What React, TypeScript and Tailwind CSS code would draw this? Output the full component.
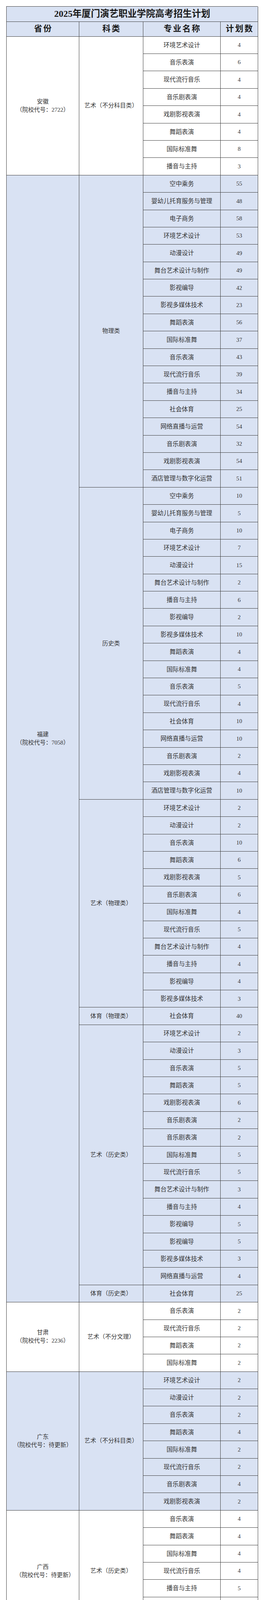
type Item = [string, number];
type Group = { cat: string; items: Item[] };
type Province = { name: string; code: string; shift?: string; groups: Group[] };

const provinces: Province[] = [
  {
    name: "安徽",
    code: "（院校代号：2722）",
    groups: [
      {
        cat: "艺术（不分科目类）",
        items: [
          ["环境艺术设计", 4],
          ["音乐表演", 6],
          ["现代流行音乐", 4],
          ["音乐剧表演", 4],
          ["戏剧影视表演", 4],
          ["舞蹈表演", 4],
          ["国际标准舞", 8],
          ["播音与主持", 3],
        ],
      },
    ],
  },
  {
    name: "福建",
    code: "（院校代号：7058）",
    groups: [
      {
        cat: "物理类",
        items: [
          ["空中乘务", 55],
          ["婴幼儿托育服务与管理", 48],
          ["电子商务", 58],
          ["环境艺术设计", 53],
          ["动漫设计", 49],
          ["舞台艺术设计与制作", 49],
          ["影视编导", 42],
          ["影视多媒体技术", 23],
          ["舞蹈表演", 56],
          ["国际标准舞", 37],
          ["音乐表演", 43],
          ["现代流行音乐", 39],
          ["播音与主持", 34],
          ["社会体育", 25],
          ["网络直播与运营", 54],
          ["音乐剧表演", 32],
          ["戏剧影视表演", 54],
          ["酒店管理与数字化运营", 51],
        ],
      },
      {
        cat: "历史类",
        items: [
          ["空中乘务", 10],
          ["婴幼儿托育服务与管理", 5],
          ["电子商务", 10],
          ["环境艺术设计", 7],
          ["动漫设计", 15],
          ["舞台艺术设计与制作", 2],
          ["播音与主持", 6],
          ["影视编导", 2],
          ["影视多媒体技术", 10],
          ["舞蹈表演", 4],
          ["国际标准舞", 4],
          ["音乐表演", 5],
          ["现代流行音乐", 4],
          ["社会体育", 10],
          ["网络直播与运营", 10],
          ["音乐剧表演", 2],
          ["戏剧影视表演", 4],
          ["酒店管理与数字化运营", 10],
        ],
      },
      {
        cat: "艺术（物理类）",
        items: [
          ["环境艺术设计", 2],
          ["动漫设计", 2],
          ["音乐表演", 10],
          ["舞蹈表演", 6],
          ["戏剧影视表演", 5],
          ["音乐剧表演", 6],
          ["国际标准舞", 4],
          ["现代流行音乐", 5],
          ["舞台艺术设计与制作", 4],
          ["播音与主持", 4],
          ["影视编导", 4],
          ["影视多媒体技术", 3],
        ],
      },
      { cat: "体育（物理类）", items: [["社会体育", 40]] },
      {
        cat: "艺术（历史类）",
        items: [
          ["环境艺术设计", 2],
          ["动漫设计", 3],
          ["音乐表演", 5],
          ["舞蹈表演", 5],
          ["戏剧影视表演", 6],
          ["音乐剧表演", 2],
          ["音乐剧表演", 2],
          ["国际标准舞", 5],
          ["现代流行音乐", 5],
          ["舞台艺术设计与制作", 3],
          ["播音与主持", 4],
          ["影视编导", 5],
          ["影视编导", 5],
          ["影视多媒体技术", 3],
          ["网络直播与运营", 4],
        ],
      },
      { cat: "体育（历史类）", items: [["社会体育", 25]] },
    ],
  },
  {
    name: "甘肃",
    code: "（院校代号：2236）",
    groups: [
      {
        cat: "艺术（不分文理）",
        items: [
          ["音乐表演", 2],
          ["现代流行音乐", 2],
          ["舞蹈表演", 2],
          ["国际标准舞", 2],
        ],
      },
    ],
  },
  {
    name: "广东",
    code: "（院校代号：待更新）",
    groups: [
      {
        cat: "艺术（不分科目类）",
        items: [
          ["环境艺术设计", 2],
          ["动漫设计", 2],
          ["音乐表演", 2],
          ["舞蹈表演", 4],
          ["国际标准舞", 2],
          ["现代流行音乐", 2],
          ["音乐剧表演", 4],
          ["戏剧影视表演", 2],
        ],
      },
    ],
  },
  {
    name: "广西",
    code: "（院校代号：待更新）",
    shift: "pl-[12px]",
    groups: [
      {
        cat: "艺术（历史类）",
        items: [
          ["音乐表演", 4],
          ["舞蹈表演", 4],
          ["国际标准舞", 4],
          ["现代流行音乐", 4],
          ["播音与主持", 5],
          ["戏剧影视表演", 2],
          ["音乐剧表演", 2],
        ],
      },
    ],
  },
  {
    name: "贵州",
    code: "（院校代号：2540）",
    shift: "pl-[6px]",
    groups: [
      {
        cat: "艺术（不分科目类）",
        items: [
          ["音乐表演", 2],
          ["舞蹈表演", 4],
        ],
      },
    ],
  },
  {
    name: "海南",
    code: "（院校代号：1243）",
    groups: [
      {
        cat: "艺术（不分文理）",
        items: [
          ["音乐表演", 2],
          ["舞蹈表演", 4],
          ["国际标准舞", 3],
          ["现代流行音乐", 2],
          ["戏剧影视表演", 2],
          ["音乐剧表演", 2],
        ],
      },
    ],
  },
  {
    name: "河北",
    code: "（院校代号：2564）",
    groups: [
      { cat: "物理类", items: [["酒店管理与数字化运营", 20]] },
      {
        cat: "艺术（不分科目类）",
        items: [
          ["音乐表演", 10],
          ["舞蹈表演", 10],
          ["国际标准舞", 10],
          ["现代流行音乐", 10],
          ["戏剧影视表演", 10],
          ["音乐剧表演", 10],
        ],
      },
    ],
  },
  {
    name: "河南",
    code: "（院校代号：9726）",
    shift: "pl-[10px]",
    groups: [
      {
        cat: "艺术（历史类）",
        items: [
          ["音乐表演", 4],
          ["现代流行音乐", 2],
          ["音乐剧表演", 2],
          ["国际标准舞", 19],
          ["舞蹈表演", 2],
          ["播音与主持", 4],
          ["戏剧影视表演", 4],
        ],
      },
      { cat: "物理类", items: [["酒店管理与数字化运营", 6]] },
    ],
  },
  {
    name: "黑龙江",
    code: "（院校代号：4776）",
    shift: "pl-[6px]",
    groups: [
      {
        cat: "艺术（不分科目类）",
        items: [
          ["音乐表演", 3],
          ["国际标准舞", 2],
          ["舞蹈表演", 3],
          ["现代流行音乐", 2],
          ["影视编导", 4],
        ],
      },
    ],
  },
  {
    name: "湖北",
    code: "（院校代号：T094）",
    groups: [
      {
        cat: "艺术（不分文理）",
        items: [
          ["环境艺术设计", 3],
          ["音乐表演", 4],
          ["现代流行音乐", 4],
          ["舞蹈表演", 4],
          ["国际标准舞", 4],
          ["音乐剧表演", 2],
          ["戏剧影视表演", 2],
        ],
      },
    ],
  },
  {
    name: "湖南",
    code: "（院校代号：3550）",
    shift: "pl-[6px]",
    groups: [
      {
        cat: "物理类",
        items: [
          ["婴幼儿托育服务与管理", 2],
          ["环境艺术设计", 2],
          ["影视多媒体技术", 2],
        ],
      },
    ],
  },
  {
    name: "吉林",
    code: "（院校代号：待更新）",
    groups: [
      {
        cat: "艺术（历史类）",
        items: [
          ["舞台艺术设计与制作", 3],
          ["音乐表演", 2],
        ],
      },
    ],
  },
  {
    name: "江苏",
    code: "（院校代号：8151）",
    shift: "pl-[10px]",
    groups: [
      {
        cat: "艺术（历史类）",
        items: [
          ["音乐表演", 3],
          ["现代流行音乐", 3],
        ],
      },
    ],
  },
  {
    name: "江西",
    code: "（院校代号：6432）",
    shift: "pl-[20px]",
    groups: [
      {
        cat: "艺术（不分科目类）",
        items: [
          ["动漫设计", 4],
          ["音乐表演", 4],
          ["现代流行音乐", 4],
          ["音乐表演", 6],
          ["现代流行音乐", 5],
          ["舞蹈表演", 6],
          ["戏剧影视表演", 4],
          ["国际标准舞", 5],
          ["舞台艺术设计与制作", 4],
          ["播音与主持", 2],
          ["影视编导", 5],
          ["音乐剧表演", 2],
        ],
      },
    ],
  },
  {
    name: "辽宁",
    code: "（院校代号：待更新）",
    groups: [{ cat: "艺术（历史类）", items: [["音乐表演", 7]] }],
  },
  {
    name: "内蒙古",
    code: "（院校代号：0B86）",
    groups: [
      {
        cat: "艺术（不分文理）",
        items: [
          ["音乐表演", 2],
          ["现代流行音乐", 3],
        ],
      },
    ],
  },
  {
    name: "宁夏",
    code: "（院校代号：3590）",
    shift: "pl-[18px]",
    groups: [
      {
        cat: "物理类",
        items: [
          ["电子商务", 2],
          ["网络直播与运营", 2],
        ],
      },
    ],
  },
  {
    name: "山东",
    code: "（院校代号：D767）",
    shift: "pl-[22px]",
    groups: [
      {
        cat: "艺术（不分文理）",
        items: [
          ["音乐表演", 5],
          ["舞蹈表演", 11],
          ["国际标准舞", 17],
          ["音乐剧表演", 5],
          ["现代流行音乐", 5],
          ["戏剧影视表演", 4],
        ],
      },
    ],
  },
  {
    name: "四川",
    code: "（院校代号：3551）",
    shift: "pl-[31px]",
    groups: [
      {
        cat: "艺术（不分科目类）",
        items: [
          ["音乐表演", 4],
          ["舞蹈表演", 2],
        ],
      },
    ],
  },
  {
    name: "云南",
    code: "（院校代号3524）",
    shift: "pl-[20px]",
    groups: [
      {
        cat: "艺术（不分科目类）",
        items: [
          ["音乐表演", 2],
          ["音乐表演", 4],
          ["舞蹈表演", 3],
          ["国际标准舞", 2],
          ["播音与主持", 2],
        ],
      },
    ],
  },
  {
    name: "浙江",
    code: "（院校代号：3551）",
    shift: "pl-[20px]",
    groups: [
      {
        cat: "艺术（不分文理）",
        items: [
          ["音乐表演", 10],
          ["舞蹈表演", 10],
          ["国际标准舞", 10],
          ["戏剧影视表演", 10],
          ["音乐剧表演", 10],
          ["现代流行音乐", 10],
        ],
      },
      { cat: "综合改革", items: [["酒店管理与数字化运营", 13]] },
    ],
  },
  {
    name: "重庆",
    code: "（院校代号：3522）",
    shift: "pl-[4px]",
    groups: [
      {
        cat: "艺术（不分科目类）",
        items: [
          ["音乐表演", 2],
          ["舞蹈表演", 4],
          ["音乐剧表演", 3],
          ["现代流行音乐", 2],
        ],
      },
    ],
  },
];

const cell = "flex items-center justify-center border-r border-b border-[#3d3d3d] text-center";

const App = () => {
  return (
    <div className="bg-white pt-4 pb-6 pl-4 font-['Liberation_Serif','Noto_Sans_CJK_SC',serif] text-[#333333]">
      <div className="grid w-[644px] grid-cols-[186px_164px_198px_96px] grid-rows-[38.6px_38px] auto-rows-[44.4px] border-t border-l border-[#3d3d3d]">
        <div className={`${cell} col-span-4 bg-[#d9e2f3] text-[23.5px] font-bold text-[#1a1a1a]`}>
          2025年厦门演艺职业学院高考招生计划
        </div>
        {["省份", "科类", "专业名称", "计划数"].map((h) => (
          <div
            key={h}
            className={`${cell} bg-[#d9e2f3] pl-[3px] text-[21px] font-bold tracking-[3px] text-[#1a1a1a]`}
          >
            {h}
          </div>
        ))}
        {provinces.map((p, pi) => {
          const total = p.groups.reduce((n, g) => n + g.items.length, 0);
          const bg = pi % 2 === 1 ? "bg-[#d9e2f3]" : "bg-white";
          return p.groups.map((g, gi) =>
            g.items.map(([major, count], ii) => [
              gi === 0 && ii === 0 ? (
                <div
                  key={`p-${pi}`}
                  className={`${cell} ${bg} col-start-1 flex-col text-[15px] leading-[21px]`}
                  style={{ gridRow: `span ${total}` }}
                >
                  <div>{p.name}</div>
                  <div className={p.shift}>{p.code}</div>
                </div>
              ) : null,
              ii === 0 ? (
                <div
                  key={`c-${pi}-${gi}`}
                  className={`${cell} ${bg} col-start-2 text-[15px] tracking-[0.2px]`}
                  style={{ gridRow: `span ${g.items.length}` }}
                >
                  {g.cat}
                </div>
              ) : null,
              <div key={`m-${pi}-${gi}-${ii}`} className={`${cell} ${bg} col-start-3 text-[15.6px]`}>
                {major}
              </div>,
              <div key={`n-${pi}-${gi}-${ii}`} className={`${cell} ${bg} col-start-4 text-[15px]`}>
                {count}
              </div>,
            ])
          );
        })}
      </div>
    </div>
  );
};

export default App;
